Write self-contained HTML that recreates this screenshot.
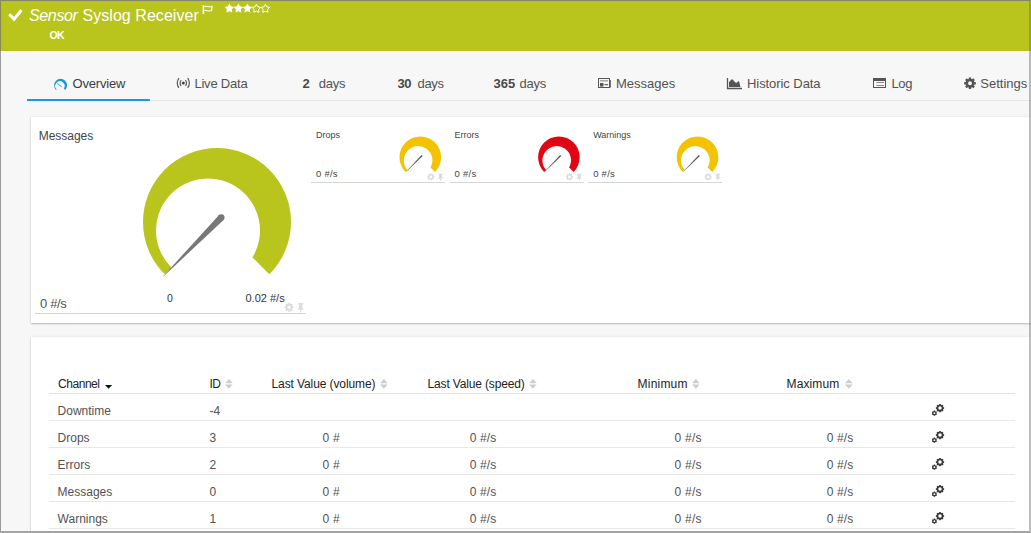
<!DOCTYPE html>
<html><head><meta charset="utf-8"><style>
html,body{margin:0;padding:0;}
body{width:1031px;height:533px;overflow:hidden;position:relative;background:#f7f7f7;font-family:"Liberation Sans",sans-serif;}
.t{position:absolute;white-space:pre;line-height:1;}
.panel{position:absolute;background:#fff;box-shadow:0 1px 1.5px rgba(0,0,0,0.22), 0 0 3px rgba(0,0,0,0.09);}
.frame{position:absolute;left:0;top:0;width:1031px;height:533px;box-sizing:border-box;border-top:1px solid rgba(120,120,120,0.8);border-left:1px solid rgba(110,110,110,0.66);border-right:2px solid rgba(110,110,110,0.45);border-bottom:2px solid #a4a4a4;pointer-events:none;}
</style></head><body>
<div style="position:absolute;left:0;top:0;width:1031px;height:51px;background:#b9c41c"></div>
<svg style="position:absolute;left:0;top:0" width="40" height="40"><path d="M9.3 14.3 L14 19.2 L21.4 10.2" fill="none" stroke="#fff" stroke-width="3.1"/></svg>
<div class="t" style="left:29px;top:8.46px;font-size:16px;color:#fff;font-style:italic;letter-spacing:-0.35px">Sensor</div>
<div class="t" style="left:82.5px;top:8.46px;font-size:16px;color:#fff;letter-spacing:0.05px">Syslog Receiver</div>
<svg style="position:absolute;left:0;top:0" width="230" height="20"><rect x="202.6" y="5.2" width="1.6" height="8.7" fill="#fff"/><path d="M204.3 6.6 C206.5 5.6, 208.5 7.6, 212.2 6.4 L211.6 10.6 C208.5 11.8, 206.5 9.8, 204.3 10.8" fill="none" stroke="#fff" stroke-width="1.05"/></svg>
<svg style="position:absolute;left:220px;top:0" width="60" height="18"><polygon points="9.40,3.50 10.96,6.36 14.16,6.95 11.92,9.32 12.34,12.55 9.40,11.15 6.46,12.55 6.88,9.32 4.64,6.95 7.84,6.36" fill="#fff"/><polygon points="18.40,3.50 19.96,6.36 23.16,6.95 20.92,9.32 21.34,12.55 18.40,11.15 15.46,12.55 15.88,9.32 13.64,6.95 16.84,6.36" fill="#fff"/><polygon points="27.40,3.50 28.96,6.36 32.16,6.95 29.92,9.32 30.34,12.55 27.40,11.15 24.46,12.55 24.88,9.32 22.64,6.95 25.84,6.36" fill="#fff"/><polygon points="36.40,4.30 37.79,6.84 40.63,7.37 38.64,9.48 39.02,12.35 36.40,11.11 33.78,12.35 34.16,9.48 32.17,7.37 35.01,6.84" fill="none" stroke="#fff" stroke-width="1.0"/><polygon points="45.40,4.30 46.79,6.84 49.63,7.37 47.64,9.48 48.02,12.35 45.40,11.11 42.78,12.35 43.16,9.48 41.17,7.37 44.01,6.84" fill="none" stroke="#fff" stroke-width="1.0"/></svg>
<div class="t" style="left:49.5px;top:30.01px;font-size:10.5px;color:#fff;font-weight:bold;letter-spacing:-0.6px">OK</div>
<div style="position:absolute;left:27px;top:100px;width:1004px;height:1px;background:#e6e6e6"></div>
<div style="position:absolute;left:27px;top:99px;width:123px;height:2px;background:#1a9ad6"></div>
<svg style="position:absolute;left:0;top:0" width="1031" height="533"><path d="M56.00 89.90 A6.5 6.5 0 1 1 65.20 89.90 L63.85 88.55 A4.7 4.7 0 1 0 56.58 89.32 Z" fill="#1a9ad6"/><path d="M57.4 83.5 L61.8 86.9" stroke="#1a9ad6" stroke-width="0.9"/></svg>
<div class="t" style="left:72.6px;top:77.00px;font-size:13px;color:#3c3c3c;letter-spacing:-0.2px">Overview</div>
<svg style="position:absolute;left:172px;top:74px" width="22" height="20"><circle cx="11.3" cy="9" r="1.5" fill="#444"/><path d="M9.2 6 A5 5 0 0 0 9.2 12 M13.4 6 A5 5 0 0 1 13.4 12 M6.9 4.1 A8.75 8.75 0 0 0 6.9 13.9 M15.7 4.1 A8.75 8.75 0 0 1 15.7 13.9" fill="none" stroke="#555" stroke-width="1.15"/></svg>
<div class="t" style="left:194.4px;top:77.00px;font-size:13px;color:#525252;letter-spacing:-0.2px">Live Data</div>
<div class="t" style="left:302.5px;top:77.00px;font-size:13px;color:#4a4a4a;font-weight:bold">2</div>
<div class="t" style="left:318.8px;top:77.00px;font-size:13px;color:#525252;letter-spacing:-0.25px">days</div>
<div class="t" style="left:397.6px;top:77.00px;font-size:13px;color:#4a4a4a;font-weight:bold;letter-spacing:-0.6px">30</div>
<div class="t" style="left:417.5px;top:77.00px;font-size:13px;color:#525252;letter-spacing:-0.35px">days</div>
<div class="t" style="left:493.5px;top:77.00px;font-size:13px;color:#4a4a4a;font-weight:bold">365</div>
<div class="t" style="left:519.6px;top:77.00px;font-size:13px;color:#525252;letter-spacing:-0.25px">days</div>
<svg style="position:absolute;left:594px;top:74px" width="22" height="20"><rect x="4.5" y="4.5" width="11" height="9" fill="none" stroke="#555" stroke-width="1"/><rect x="15" y="6" width="1.8" height="7.5" fill="#555"/><rect x="6" y="6" width="8" height="1.6" fill="#aaa"/><rect x="6" y="9" width="3.5" height="3.5" fill="#555"/><rect x="10.5" y="10" width="3.5" height="1.2" fill="#666"/></svg>
<div class="t" style="left:616px;top:77.00px;font-size:13px;color:#525252;">Messages</div>
<svg style="position:absolute;left:722px;top:74px" width="24" height="20"><path d="M5.5 4 V14.5 H20" fill="none" stroke="#555" stroke-width="1.3"/><path d="M7 13 V8 L10 5 L14 9 L17 7 L18.5 13 Z" fill="#555"/></svg>
<div class="t" style="left:747px;top:77.00px;font-size:13px;color:#525252;letter-spacing:-0.07px">Historic Data</div>
<svg style="position:absolute;left:868px;top:74px" width="22" height="20"><rect x="5.5" y="4.5" width="12" height="9" fill="none" stroke="#555" stroke-width="1"/><rect x="5.5" y="4.5" width="12" height="2.5" fill="#555"/><path d="M8.5 8.5 H16 M8.5 11.5 H16" stroke="#888" stroke-width="1"/></svg>
<div class="t" style="left:891.5px;top:77.00px;font-size:13px;color:#525252;letter-spacing:-0.4px">Log</div>
<svg style="position:absolute;left:959px;top:74px" width="22" height="20"><polygon points="9.71,4.94 9.85,3.46 12.15,3.46 12.29,4.94 13.14,5.29 14.28,4.34 15.91,5.97 14.96,7.11 15.31,7.96 16.79,8.10 16.79,10.40 15.31,10.54 14.96,11.39 15.91,12.53 14.28,14.16 13.14,13.21 12.29,13.56 12.15,15.04 9.85,15.04 9.71,13.56 8.86,13.21 7.72,14.16 6.09,12.53 7.04,11.39 6.69,10.54 5.21,10.40 5.21,8.10 6.69,7.96 7.04,7.11 6.09,5.97 7.72,4.34 8.86,5.29" fill="#555"/><circle cx="11" cy="9.25" r="1.9" fill="#f7f7f7"/></svg>
<div class="t" style="left:980.3px;top:77.00px;font-size:13px;color:#525252;">Settings</div>
<div class="panel" style="left:31px;top:117px;width:1010px;height:206px"></div>
<div class="t" style="left:38.8px;top:129.84px;font-size:12px;color:#444;letter-spacing:-0.05px">Messages</div>
<svg style="position:absolute;left:0;top:0" width="1031" height="533"><path d="M164.67 274.33 A74 74 0 1 1 269.33 274.33 L252.46 257.46 A52 52 0 1 0 171.48 267.52 Z" fill="#b9c41c"/><path d="M218.85 215.28 L163.16 276.16 L163.44 276.44 L223.55 219.92 Z" fill="#777"/><circle cx="221.2" cy="217.6" r="3.3" fill="#777"/><path d="M405.59 172.01 A20.8 20.8 0 1 1 435.01 172.01 L430.51 167.51 A14.3 14.3 0 1 0 407.55 170.05 Z" fill="#f3c300"/><path d="M421.53 154.94 L406.43 171.33 L406.57 171.47 L422.67 156.06 Z" fill="#555"/><path d="M544.19 172.01 A20.8 20.8 0 1 1 573.61 172.01 L569.11 167.51 A14.3 14.3 0 1 0 546.15 170.05 Z" fill="#e10613"/><path d="M560.13 154.94 L545.03 171.33 L545.17 171.47 L561.27 156.06 Z" fill="#555"/><path d="M682.79 172.01 A20.8 20.8 0 1 1 712.21 172.01 L707.71 167.51 A14.3 14.3 0 1 0 684.75 170.05 Z" fill="#f3c300"/><path d="M698.73 154.94 L683.63 171.33 L683.77 171.47 L699.87 156.06 Z" fill="#555"/></svg>
<div class="t" style="left:39.9px;top:297.30px;font-size:13px;color:#525252;letter-spacing:-0.3px">0 #/s</div>
<div class="t" style="left:167px;top:293.11px;font-size:10.5px;color:#333;">0</div>
<div class="t" style="left:245.5px;top:292.69px;font-size:11px;color:#333;">0.02 #/s</div>
<div style="position:absolute;left:35px;top:313px;width:271px;height:1px;background:#d6d6d6"></div>
<svg style="position:absolute;left:0;top:0" width="1031" height="533"><polygon points="288.19,304.02 288.29,302.77 289.91,302.77 290.01,304.02 290.77,304.34 291.73,303.53 292.87,304.67 292.06,305.63 292.38,306.39 293.63,306.49 293.63,308.11 292.38,308.21 292.06,308.97 292.87,309.93 291.73,311.07 290.77,310.26 290.01,310.58 289.91,311.83 288.29,311.83 288.19,310.58 287.43,310.26 286.47,311.07 285.33,309.93 286.14,308.97 285.82,308.21 284.57,308.11 284.57,306.49 285.82,306.39 286.14,305.63 285.33,304.67 286.47,303.53 287.43,304.34" fill="#d9dcde"/><circle cx="289.1" cy="307.3" r="1.656" fill="#fff"/><path d="M298.19 303.10 H303.21 V304.42 H302.28 V307.80 L304.00 309.87 H297.40 L299.12 307.80 V304.42 H298.19 Z" fill="#d9dcde"/><rect x="300.20" y="309.87" width="1" height="2.63" fill="#d9dcde"/></svg>
<div class="t" style="left:316.0px;top:130.58px;font-size:9px;color:#444;">Drops</div>
<div class="t" style="left:316.0px;top:169.16px;font-size:9.5px;color:#444;letter-spacing:0.25px">0 #/s</div>
<div style="position:absolute;left:311.0px;top:182px;width:134px;height:1px;background:#d6d6d6"></div>
<svg style="position:absolute;left:0;top:0" width="1031" height="533"><polygon points="430.17,174.26 430.25,173.26 431.55,173.26 431.63,174.26 432.25,174.52 433.02,173.86 433.94,174.78 433.28,175.55 433.54,176.17 434.54,176.25 434.54,177.55 433.54,177.63 433.28,178.25 433.94,179.02 433.02,179.94 432.25,179.28 431.63,179.54 431.55,180.54 430.25,180.54 430.17,179.54 429.55,179.28 428.78,179.94 427.86,179.02 428.52,178.25 428.26,177.63 427.26,177.55 427.26,176.25 428.26,176.17 428.52,175.55 427.86,174.78 428.78,173.86 429.55,174.52" fill="#d9dcde"/><circle cx="430.9" cy="176.9" r="1.332" fill="#fff"/><path d="M438.32 173.80 H442.88 V174.77 H442.04 V177.25 L443.60 178.77 H437.60 L439.16 177.25 V174.77 H438.32 Z" fill="#d9dcde"/><rect x="440.10" y="178.77" width="1" height="1.93" fill="#d9dcde"/></svg>
<div class="t" style="left:454.6px;top:130.58px;font-size:9px;color:#444;">Errors</div>
<div class="t" style="left:454.6px;top:169.16px;font-size:9.5px;color:#444;letter-spacing:0.25px">0 #/s</div>
<div style="position:absolute;left:449.6px;top:182px;width:134px;height:1px;background:#d6d6d6"></div>
<svg style="position:absolute;left:0;top:0" width="1031" height="533"><polygon points="568.77,174.26 568.85,173.26 570.15,173.26 570.23,174.26 570.85,174.52 571.62,173.86 572.54,174.78 571.88,175.55 572.14,176.17 573.14,176.25 573.14,177.55 572.14,177.63 571.88,178.25 572.54,179.02 571.62,179.94 570.85,179.28 570.23,179.54 570.15,180.54 568.85,180.54 568.77,179.54 568.15,179.28 567.38,179.94 566.46,179.02 567.12,178.25 566.86,177.63 565.86,177.55 565.86,176.25 566.86,176.17 567.12,175.55 566.46,174.78 567.38,173.86 568.15,174.52" fill="#d9dcde"/><circle cx="569.5" cy="176.9" r="1.332" fill="#fff"/><path d="M576.92 173.80 H581.48 V174.77 H580.64 V177.25 L582.20 178.77 H576.20 L577.76 177.25 V174.77 H576.92 Z" fill="#d9dcde"/><rect x="578.70" y="178.77" width="1" height="1.93" fill="#d9dcde"/></svg>
<div class="t" style="left:593.2px;top:130.58px;font-size:9px;color:#444;">Warnings</div>
<div class="t" style="left:593.2px;top:169.16px;font-size:9.5px;color:#444;letter-spacing:0.25px">0 #/s</div>
<div style="position:absolute;left:588.2px;top:182px;width:134px;height:1px;background:#d6d6d6"></div>
<svg style="position:absolute;left:0;top:0" width="1031" height="533"><polygon points="707.37,174.26 707.45,173.26 708.75,173.26 708.83,174.26 709.45,174.52 710.22,173.86 711.14,174.78 710.48,175.55 710.74,176.17 711.74,176.25 711.74,177.55 710.74,177.63 710.48,178.25 711.14,179.02 710.22,179.94 709.45,179.28 708.83,179.54 708.75,180.54 707.45,180.54 707.37,179.54 706.75,179.28 705.98,179.94 705.06,179.02 705.72,178.25 705.46,177.63 704.46,177.55 704.46,176.25 705.46,176.17 705.72,175.55 705.06,174.78 705.98,173.86 706.75,174.52" fill="#d9dcde"/><circle cx="708.0999999999999" cy="176.9" r="1.332" fill="#fff"/><path d="M715.52 173.80 H720.08 V174.77 H719.24 V177.25 L720.80 178.77 H714.80 L716.36 177.25 V174.77 H715.52 Z" fill="#d9dcde"/><rect x="717.30" y="178.77" width="1" height="1.93" fill="#d9dcde"/></svg>
<div class="panel" style="left:31px;top:337px;width:1010px;height:220px"></div>
<div class="t" style="left:58px;top:377.74px;font-size:12px;color:#222;letter-spacing:-0.45px">Channel</div>
<svg style="position:absolute;left:104px;top:384px" width="10" height="6"><path d="M1 1 H8.2 L4.6 4.8 Z" fill="#111"/></svg>
<div class="t" style="left:209.6px;top:377.74px;font-size:12px;color:#222;letter-spacing:-0.6px">ID</div>
<svg style="position:absolute;left:224.7px;top:378px" width="10" height="12"><path d="M0 5.2 L3.85 1 L7.7 5.2 Z M0 6.6 L3.85 10.8 L7.7 6.6 Z" fill="#cdcdcd"/></svg>
<div class="t" style="left:271.5px;top:377.74px;font-size:12px;color:#222;letter-spacing:-0.1px">Last Value (volume)</div>
<svg style="position:absolute;left:380.2px;top:378px" width="10" height="12"><path d="M0 5.2 L3.85 1 L7.7 5.2 Z M0 6.6 L3.85 10.8 L7.7 6.6 Z" fill="#cdcdcd"/></svg>
<div class="t" style="left:427.5px;top:377.74px;font-size:12px;color:#222;letter-spacing:-0.15px">Last Value (speed)</div>
<svg style="position:absolute;left:528.6px;top:378px" width="10" height="12"><path d="M0 5.2 L3.85 1 L7.7 5.2 Z M0 6.6 L3.85 10.8 L7.7 6.6 Z" fill="#cdcdcd"/></svg>
<div class="t" style="left:637.6px;top:377.74px;font-size:12px;color:#222;letter-spacing:0.2px">Minimum</div>
<svg style="position:absolute;left:692.4px;top:378px" width="10" height="12"><path d="M0 5.2 L3.85 1 L7.7 5.2 Z M0 6.6 L3.85 10.8 L7.7 6.6 Z" fill="#cdcdcd"/></svg>
<div class="t" style="left:786.6px;top:377.74px;font-size:12px;color:#222;letter-spacing:0.1px">Maximum</div>
<svg style="position:absolute;left:844.5px;top:378px" width="10" height="12"><path d="M0 5.2 L3.85 1 L7.7 5.2 Z M0 6.6 L3.85 10.8 L7.7 6.6 Z" fill="#cdcdcd"/></svg>
<div style="position:absolute;left:49px;top:393px;width:966px;height:1px;background:#e4e4e4"></div>
<div class="t" style="left:57.6px;top:405.14px;font-size:12px;color:#525252;">Downtime</div>
<div class="t" style="left:209.5px;top:405.14px;font-size:12px;color:#525252;">-4</div>
<svg style="position:absolute;left:930px;top:403.5px" width="16" height="14"><polygon points="9.06,0.73 9.26,-0.03 10.74,-0.03 10.94,0.73 11.72,1.05 12.40,0.65 13.45,1.70 13.05,2.38 13.37,3.16 14.13,3.36 14.13,4.84 13.37,5.04 13.05,5.82 13.45,6.50 12.40,7.55 11.72,7.15 10.94,7.47 10.74,8.23 9.26,8.23 9.06,7.47 8.28,7.15 7.60,7.55 6.55,6.50 6.95,5.82 6.63,5.04 5.87,4.84 5.87,3.36 6.63,3.16 6.95,2.38 6.55,1.70 7.60,0.65 8.28,1.05" fill="#3a3a3a"/><circle cx="10" cy="4.1" r="1.75" fill="#fff"/><polygon points="3.62,7.14 3.77,6.57 5.03,6.57 5.18,7.14 5.79,7.50 6.36,7.34 6.99,8.43 6.57,8.84 6.57,9.56 6.99,9.97 6.36,11.06 5.79,10.90 5.18,11.26 5.03,11.83 3.77,11.83 3.62,11.26 3.01,10.90 2.44,11.06 1.81,9.97 2.23,9.56 2.23,8.84 1.81,8.43 2.44,7.34 3.01,7.50" fill="#3a3a3a"/><circle cx="4.4" cy="9.2" r="0.9" fill="#fff"/></svg>
<div style="position:absolute;left:49px;top:420px;width:966px;height:1px;background:#e8e8e8"></div>
<div class="t" style="left:57.6px;top:432.14px;font-size:12px;color:#525252;">Drops</div>
<div class="t" style="left:209.5px;top:432.14px;font-size:12px;color:#525252;">3</div>
<div class="t" style="left:322.5px;top:432.14px;font-size:12px;color:#525252;letter-spacing:0.3px">0 #</div>
<div class="t" style="left:469.8px;top:432.14px;font-size:12px;color:#525252;letter-spacing:0.1px">0 #/s</div>
<div class="t" style="left:674.6px;top:432.14px;font-size:12px;color:#525252;letter-spacing:0.2px">0 #/s</div>
<div class="t" style="left:826.8px;top:432.14px;font-size:12px;color:#525252;letter-spacing:0.1px">0 #/s</div>
<svg style="position:absolute;left:930px;top:430.5px" width="16" height="14"><polygon points="9.06,0.73 9.26,-0.03 10.74,-0.03 10.94,0.73 11.72,1.05 12.40,0.65 13.45,1.70 13.05,2.38 13.37,3.16 14.13,3.36 14.13,4.84 13.37,5.04 13.05,5.82 13.45,6.50 12.40,7.55 11.72,7.15 10.94,7.47 10.74,8.23 9.26,8.23 9.06,7.47 8.28,7.15 7.60,7.55 6.55,6.50 6.95,5.82 6.63,5.04 5.87,4.84 5.87,3.36 6.63,3.16 6.95,2.38 6.55,1.70 7.60,0.65 8.28,1.05" fill="#3a3a3a"/><circle cx="10" cy="4.1" r="1.75" fill="#fff"/><polygon points="3.62,7.14 3.77,6.57 5.03,6.57 5.18,7.14 5.79,7.50 6.36,7.34 6.99,8.43 6.57,8.84 6.57,9.56 6.99,9.97 6.36,11.06 5.79,10.90 5.18,11.26 5.03,11.83 3.77,11.83 3.62,11.26 3.01,10.90 2.44,11.06 1.81,9.97 2.23,9.56 2.23,8.84 1.81,8.43 2.44,7.34 3.01,7.50" fill="#3a3a3a"/><circle cx="4.4" cy="9.2" r="0.9" fill="#fff"/></svg>
<div style="position:absolute;left:49px;top:447px;width:966px;height:1px;background:#e8e8e8"></div>
<div class="t" style="left:57.6px;top:459.14px;font-size:12px;color:#525252;">Errors</div>
<div class="t" style="left:209.5px;top:459.14px;font-size:12px;color:#525252;">2</div>
<div class="t" style="left:322.5px;top:459.14px;font-size:12px;color:#525252;letter-spacing:0.3px">0 #</div>
<div class="t" style="left:469.8px;top:459.14px;font-size:12px;color:#525252;letter-spacing:0.1px">0 #/s</div>
<div class="t" style="left:674.6px;top:459.14px;font-size:12px;color:#525252;letter-spacing:0.2px">0 #/s</div>
<div class="t" style="left:826.8px;top:459.14px;font-size:12px;color:#525252;letter-spacing:0.1px">0 #/s</div>
<svg style="position:absolute;left:930px;top:457.5px" width="16" height="14"><polygon points="9.06,0.73 9.26,-0.03 10.74,-0.03 10.94,0.73 11.72,1.05 12.40,0.65 13.45,1.70 13.05,2.38 13.37,3.16 14.13,3.36 14.13,4.84 13.37,5.04 13.05,5.82 13.45,6.50 12.40,7.55 11.72,7.15 10.94,7.47 10.74,8.23 9.26,8.23 9.06,7.47 8.28,7.15 7.60,7.55 6.55,6.50 6.95,5.82 6.63,5.04 5.87,4.84 5.87,3.36 6.63,3.16 6.95,2.38 6.55,1.70 7.60,0.65 8.28,1.05" fill="#3a3a3a"/><circle cx="10" cy="4.1" r="1.75" fill="#fff"/><polygon points="3.62,7.14 3.77,6.57 5.03,6.57 5.18,7.14 5.79,7.50 6.36,7.34 6.99,8.43 6.57,8.84 6.57,9.56 6.99,9.97 6.36,11.06 5.79,10.90 5.18,11.26 5.03,11.83 3.77,11.83 3.62,11.26 3.01,10.90 2.44,11.06 1.81,9.97 2.23,9.56 2.23,8.84 1.81,8.43 2.44,7.34 3.01,7.50" fill="#3a3a3a"/><circle cx="4.4" cy="9.2" r="0.9" fill="#fff"/></svg>
<div style="position:absolute;left:49px;top:474px;width:966px;height:1px;background:#e8e8e8"></div>
<div class="t" style="left:57.6px;top:486.14px;font-size:12px;color:#525252;">Messages</div>
<div class="t" style="left:209.5px;top:486.14px;font-size:12px;color:#525252;">0</div>
<div class="t" style="left:322.5px;top:486.14px;font-size:12px;color:#525252;letter-spacing:0.3px">0 #</div>
<div class="t" style="left:469.8px;top:486.14px;font-size:12px;color:#525252;letter-spacing:0.1px">0 #/s</div>
<div class="t" style="left:674.6px;top:486.14px;font-size:12px;color:#525252;letter-spacing:0.2px">0 #/s</div>
<div class="t" style="left:826.8px;top:486.14px;font-size:12px;color:#525252;letter-spacing:0.1px">0 #/s</div>
<svg style="position:absolute;left:930px;top:484.5px" width="16" height="14"><polygon points="9.06,0.73 9.26,-0.03 10.74,-0.03 10.94,0.73 11.72,1.05 12.40,0.65 13.45,1.70 13.05,2.38 13.37,3.16 14.13,3.36 14.13,4.84 13.37,5.04 13.05,5.82 13.45,6.50 12.40,7.55 11.72,7.15 10.94,7.47 10.74,8.23 9.26,8.23 9.06,7.47 8.28,7.15 7.60,7.55 6.55,6.50 6.95,5.82 6.63,5.04 5.87,4.84 5.87,3.36 6.63,3.16 6.95,2.38 6.55,1.70 7.60,0.65 8.28,1.05" fill="#3a3a3a"/><circle cx="10" cy="4.1" r="1.75" fill="#fff"/><polygon points="3.62,7.14 3.77,6.57 5.03,6.57 5.18,7.14 5.79,7.50 6.36,7.34 6.99,8.43 6.57,8.84 6.57,9.56 6.99,9.97 6.36,11.06 5.79,10.90 5.18,11.26 5.03,11.83 3.77,11.83 3.62,11.26 3.01,10.90 2.44,11.06 1.81,9.97 2.23,9.56 2.23,8.84 1.81,8.43 2.44,7.34 3.01,7.50" fill="#3a3a3a"/><circle cx="4.4" cy="9.2" r="0.9" fill="#fff"/></svg>
<div style="position:absolute;left:49px;top:501px;width:966px;height:1px;background:#e8e8e8"></div>
<div class="t" style="left:57.6px;top:513.14px;font-size:12px;color:#525252;">Warnings</div>
<div class="t" style="left:209.5px;top:513.14px;font-size:12px;color:#525252;">1</div>
<div class="t" style="left:322.5px;top:513.14px;font-size:12px;color:#525252;letter-spacing:0.3px">0 #</div>
<div class="t" style="left:469.8px;top:513.14px;font-size:12px;color:#525252;letter-spacing:0.1px">0 #/s</div>
<div class="t" style="left:674.6px;top:513.14px;font-size:12px;color:#525252;letter-spacing:0.2px">0 #/s</div>
<div class="t" style="left:826.8px;top:513.14px;font-size:12px;color:#525252;letter-spacing:0.1px">0 #/s</div>
<svg style="position:absolute;left:930px;top:511.5px" width="16" height="14"><polygon points="9.06,0.73 9.26,-0.03 10.74,-0.03 10.94,0.73 11.72,1.05 12.40,0.65 13.45,1.70 13.05,2.38 13.37,3.16 14.13,3.36 14.13,4.84 13.37,5.04 13.05,5.82 13.45,6.50 12.40,7.55 11.72,7.15 10.94,7.47 10.74,8.23 9.26,8.23 9.06,7.47 8.28,7.15 7.60,7.55 6.55,6.50 6.95,5.82 6.63,5.04 5.87,4.84 5.87,3.36 6.63,3.16 6.95,2.38 6.55,1.70 7.60,0.65 8.28,1.05" fill="#3a3a3a"/><circle cx="10" cy="4.1" r="1.75" fill="#fff"/><polygon points="3.62,7.14 3.77,6.57 5.03,6.57 5.18,7.14 5.79,7.50 6.36,7.34 6.99,8.43 6.57,8.84 6.57,9.56 6.99,9.97 6.36,11.06 5.79,10.90 5.18,11.26 5.03,11.83 3.77,11.83 3.62,11.26 3.01,10.90 2.44,11.06 1.81,9.97 2.23,9.56 2.23,8.84 1.81,8.43 2.44,7.34 3.01,7.50" fill="#3a3a3a"/><circle cx="4.4" cy="9.2" r="0.9" fill="#fff"/></svg>
<div style="position:absolute;left:49px;top:528px;width:966px;height:1px;background:#e8e8e8"></div>
<div class="frame"></div>
</body></html>
